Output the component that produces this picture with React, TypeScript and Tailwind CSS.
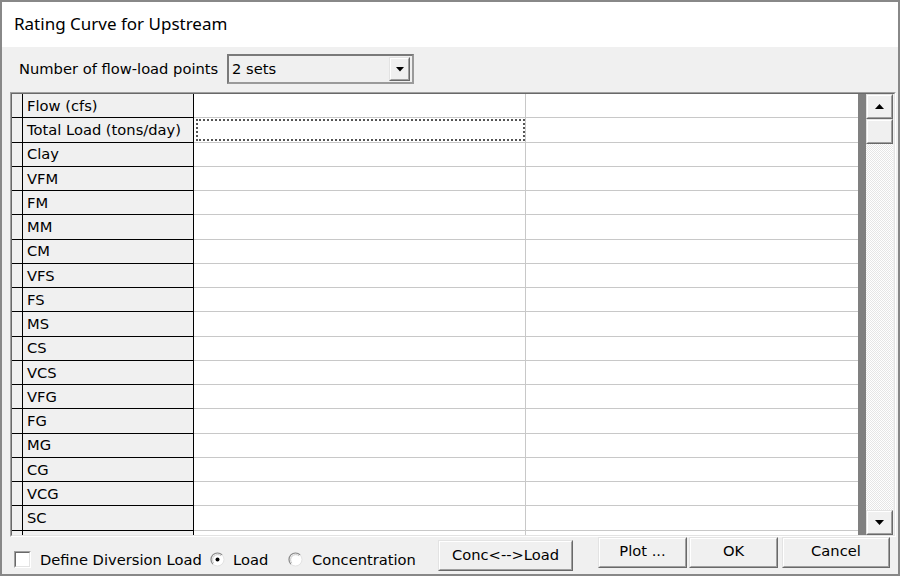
import React from "react";

const rows = [
  "Flow (cfs)",
  "Total Load (tons/day)",
  "Clay",
  "VFM",
  "FM",
  "MM",
  "CM",
  "VFS",
  "FS",
  "MS",
  "CS",
  "VCS",
  "VFG",
  "FG",
  "MG",
  "CG",
  "VCG",
  "SC",
  "",
];

function Raised({
  className,
  children,
}: {
  className: string;
  children?: React.ReactNode;
}) {
  return (
    <div
      className={
        "border border-t-[#e3e3e3] border-l-[#e3e3e3] border-b-[#696969] border-r-[#696969] " +
        className
      }
    >
      <div className="w-full h-full border border-t-white border-l-white border-b-[#a0a0a0] border-r-[#a0a0a0] bg-[#f0f0f0] flex items-center justify-center">
        {children}
      </div>
    </div>
  );
}

function Tri({ up }: { up?: boolean }) {
  return (
    <svg width="9" height="5" viewBox="0 0 9 5">
      {up ? (
        <polygon points="4.5,0 9,5 0,5" fill="#000" />
      ) : (
        <polygon points="0,0 9,0 4.5,5" fill="#000" />
      )}
    </svg>
  );
}

function Radio({ checked }: { checked?: boolean }) {
  return (
    <svg width="15" height="15" viewBox="0 0 15 15" className="shrink-0">
      <circle cx="7.5" cy="7.5" r="6.5" fill="#fff" stroke="#e3e3e3" />
      <path d="M2.9 12.1 A6.5 6.5 0 0 1 12.1 2.9" fill="none" stroke="#8a8a8a" strokeWidth="1.2" />
      <path d="M3.9 11.1 A5.1 5.1 0 0 1 11.1 3.9" fill="none" stroke="#c8c8c8" strokeWidth="1" />
      {checked && <circle cx="7.5" cy="7.5" r="2" fill="#000" />}
    </svg>
  );
}

export default function App() {
  return (
    <div className="w-[900px] h-[576px] border-2 border-[#888888] bg-[#f0f0f0] flex flex-col overflow-hidden text-black font-['DejaVu_Sans',sans-serif] text-[14.7px] leading-none">
      {/* title bar */}
      <div className="h-[45px] shrink-0 bg-white flex items-center pl-[12px] pb-[2px] font-['Noto_Sans',sans-serif] text-[17px]">
        Rating Curve for Upstream
      </div>

      {/* combo row */}
      <div className="flex items-center h-[30px] mt-[7px] shrink-0">
        <div className="w-[225px] pl-[17px]">Number of flow-load points</div>
        <div className="w-[187px] h-[30px] border-2 border-t-[#7a7a7a] border-l-[#7a7a7a] border-b-[#9a9a9a] border-r-[#9a9a9a] bg-[#f0f0f0] flex items-center">
          <span className="flex-1 pl-[3px]">2 sets</span>
          <Raised className="w-[21px] h-[24px] mr-[2px]">
            <svg width="8" height="5" viewBox="0 0 8 5">
              <polygon points="0,0 8,0 4,4.5" fill="#000" />
            </svg>
          </Raised>
        </div>
      </div>

      {/* grid */}
      <div className="mt-[8px] ml-[8px] w-[886px] h-[445px] shrink-0 border border-t-[#a0a0a0] border-l-[#a0a0a0] border-b-white border-r-white">
        <div className="w-full h-full border border-t-[#696969] border-l-[#696969] border-b-[#e3e3e3] border-r-[#e3e3e3] flex overflow-hidden">
          <div className="w-[846px] h-full flex flex-col overflow-hidden bg-white">
            {rows.map((r, i) => (
              <div key={i} className="flex h-[24.25px] shrink-0">
                <div className="w-[11px] shrink-0 bg-[#f0f0f0] border-r border-b border-black" />
                <div className="w-[171px] shrink-0 bg-[#f0f0f0] border-r border-b border-black flex items-center pl-[4px] pt-[1px]">
                  {r}
                </div>
                <div className="w-[332px] shrink-0 border-r border-b border-[#c8c8c8] relative">
                  {i === 1 && (
                    <div className="absolute top-[1px] bottom-[1px] left-[2px] right-0 border-2 border-dotted border-[#555555]" />
                  )}
                </div>
                <div className="w-[332px] shrink-0 border-b border-[#c8c8c8]" />
              </div>
            ))}
          </div>
          <div className="w-[8px] h-full bg-[#808080] shrink-0" />
          <div className="w-[28px] h-full flex flex-col shrink-0 pr-[1px]">
            <Raised className="h-[25px] w-full shrink-0">
              <Tri up />
            </Raised>
            <Raised className="h-[25px] w-full shrink-0" />
            <div className="flex-1 bg-[#f4f4f4] bg-[image:conic-gradient(#ffffff_25%,#e6e6e6_0_50%,#ffffff_0_75%,#e6e6e6_0)] bg-[length:2px_2px]" />
            <Raised className="h-[25px] w-full shrink-0">
              <Tri />
            </Raised>
          </div>
        </div>
      </div>

      {/* bottom row */}
      <div className="flex items-start h-[35px] shrink-0">
        <div className="w-[436px] h-[17px] mt-[14px] flex items-center">
          <div className="ml-[12px] w-[17px] h-[17px] shrink-0 border border-t-[#a0a0a0] border-l-[#a0a0a0] border-b-white border-r-white">
            <div className="w-full h-full border border-t-[#696969] border-l-[#696969] border-b-[#e3e3e3] border-r-[#e3e3e3] bg-white" />
          </div>
          <span className="ml-[9px] w-[170px] pt-[1px]">Define Diversion Load</span>
          <Radio checked />
          <span className="ml-[8px] w-[55px] pt-[1px]">Load</span>
          <Radio />
          <span className="ml-[9px] pt-[1px]">Concentration</span>
        </div>
        <Raised className="w-[135px] h-[31px] mt-[3px]">
          <span>Conc&lt;--&gt;Load</span>
        </Raised>
        <Raised className="w-[89px] h-[31px] ml-[25px]">
          <span className="pb-[3px]">Plot ...</span>
        </Raised>
        <Raised className="w-[89px] h-[31px] ml-[2px]">
          <span className="pb-[3px]">OK</span>
        </Raised>
        <Raised className="w-[108px] h-[31px] ml-[4px]">
          <span className="pb-[3px]">Cancel</span>
        </Raised>
      </div>
    </div>
  );
}
